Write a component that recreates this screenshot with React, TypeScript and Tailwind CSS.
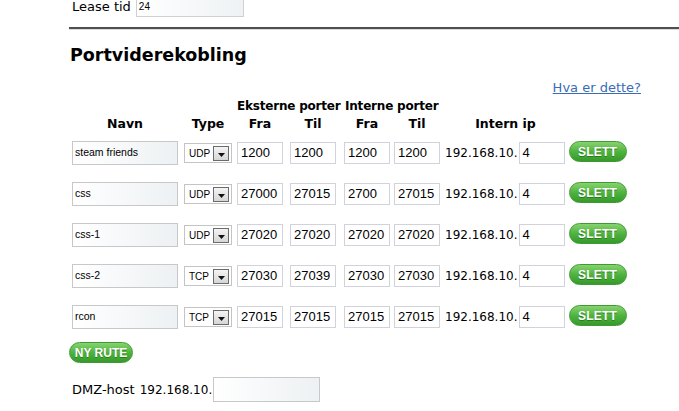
import { FC } from "react";

type Rute = {
  navn: string;
  type: "UDP" | "TCP";
  eFra: string;
  eTil: string;
  iFra: string;
  iTil: string;
  ip: string;
};

const ruter: Rute[] = [
  { navn: "steam friends", type: "UDP", eFra: "1200", eTil: "1200", iFra: "1200", iTil: "1200", ip: "4" },
  { navn: "css", type: "UDP", eFra: "27000", eTil: "27015", iFra: "2700", iTil: "27015", ip: "4" },
  { navn: "css-1", type: "UDP", eFra: "27020", eTil: "27020", iFra: "27020", iTil: "27020", ip: "4" },
  { navn: "css-2", type: "TCP", eFra: "27030", eTil: "27039", iFra: "27030", iTil: "27030", ip: "4" },
  { navn: "rcon", type: "TCP", eFra: "27015", eTil: "27015", iFra: "27015", iTil: "27015", ip: "4" },
];

const verdana = "font-['DejaVu_Sans',Verdana,sans-serif]";
const arial = "font-['Liberation_Sans',Arial,sans-serif]";

const TekstFelt: FC<{ value: string; className?: string }> = ({ value, className = "" }) => (
  <div
    className={`h-[24px] border border-[#c8c8c8] bg-gradient-to-r from-white to-[#edf1f3] pl-[2px] flex items-center text-[10.5px] text-black ${arial} ${className}`}
  >
    {value}
  </div>
);

const PortFelt: FC<{ value: string; className?: string }> = ({ value, className = "" }) => (
  <div
    className={`w-[46px] h-[22px] border border-[#d2d2dc] bg-white pl-[3px] flex items-center text-[13px] text-black ${arial} ${className}`}
  >
    {value}
  </div>
);

const TypeVelger: FC<{ value: string }> = ({ value }) => (
  <div className={`ml-[6px] w-[48px] h-[20px] border border-[#c4c4c4] bg-white flex items-center justify-between pl-[4px] pr-[2px] text-[10px] ${arial}`}>
    <span>{value}</span>
    <span className="w-[16px] h-[15px] border border-[#6b6b6b] bg-gradient-to-b from-[#f4f4f4] to-[#d6d6d6] flex items-end justify-center pb-[3px]">
      <svg width="7" height="4" viewBox="0 0 7 4">
        <path d="M0 0h7L3.5 4z" fill="#111" />
      </svg>
    </span>
  </div>
);

const GronnKnapp: FC<{ label: string; className?: string }> = ({ label, className = "" }) => (
  <div
    className={`h-[21px] rounded-full bg-gradient-to-b from-[#86d36f] via-[#4fb33f] to-[#369a2b] border border-[#3f9a33] flex items-center justify-center text-white font-bold text-[12px] tracking-[0.2px] [text-shadow:0_1px_0_#2a7a20] ${arial} ${className}`}
  >
    {label}
  </div>
);

const App: FC = () => {
  return (
    <div className={`w-[679px] h-[411px] overflow-hidden bg-white text-black ${verdana}`}>
      <div className="-mt-[3px] pl-[72px] flex items-center h-[20px] text-[13px]">
        <span>Lease tid</span>
        <div className={`ml-[5px] w-[108px] h-[20px] border border-[#d0d0d0] bg-gradient-to-r from-white to-[#eef2f4] pl-[2px] pt-[4px] text-[10px] leading-none ${arial}`}>
          24
        </div>
      </div>

      <div className="ml-[69px] mt-[10px] border-t-2 border-[#4f4f4f] border-b border-b-[#dcdcdc]" />

      <h2 className="ml-[70px] mt-[14px] text-[17.5px] font-bold leading-[22px]">Portviderekobling</h2>

      <div className="mt-[14px] flex justify-end pr-[38px]">
        <a href="#" className="text-[13px] leading-[16px] text-[#3a6cb4] underline">
          Hva er dette?
        </a>
      </div>

      <div className="mt-[1px] pl-[237px] flex text-[12px] font-bold leading-[18px] tracking-[-0.2px] whitespace-nowrap">
        <div className="w-[99px]">Eksterne porter</div>
        <div className="ml-[9px] w-[96px]">Interne porter</div>
      </div>
      <div className="pl-[72px] flex text-[12.5px] font-bold leading-[18px] text-center">
        <div className="w-[106px]">Navn</div>
        <div className="ml-[6px] w-[48px]">Type</div>
        <div className="ml-[5px] w-[46px]">Fra</div>
        <div className="ml-[7px] w-[46px]">Til</div>
        <div className="ml-[8px] w-[46px]">Fra</div>
        <div className="ml-[4px] w-[46px]">Til</div>
        <div className="ml-[5px] w-[121px]">Intern ip</div>
      </div>

      <div className="mt-[8px] pl-[72px] flex flex-col gap-[17px]">
        {ruter.map((r) => (
          <div key={r.navn} className="flex items-center h-[24px]">
            <TekstFelt value={r.navn} className="w-[106px]" />
            <TypeVelger value={r.type} />
            <PortFelt value={r.eFra} className="ml-[5px]" />
            <PortFelt value={r.eTil} className="ml-[7px]" />
            <PortFelt value={r.iFra} className="ml-[8px]" />
            <PortFelt value={r.iTil} className="ml-[4px]" />
            <span className="ml-[5px] text-[12px]">192.168.10.</span>
            <PortFelt value={r.ip} className="ml-[1px]" />
            <GronnKnapp label="SLETT" className="ml-[4px] w-[58px] -mt-[3px]" />
          </div>
        ))}
      </div>

      <div className="mt-[13px] pl-[69px]">
        <GronnKnapp label="NY RUTE" className="w-[64px] h-[20px] text-[11px] tracking-normal" />
      </div>

      <div className="mt-[14px] pl-[72px] flex items-center">
        <span className="text-[13px]">DMZ-host</span>
        <span className="ml-[5px] text-[12px]">192.168.10.</span>
        <div className="ml-[1px] w-[107px] h-[25px] border border-[#c8c8c8] bg-gradient-to-r from-white to-[#edf1f3]" />
      </div>
    </div>
  );
};

export default App;
